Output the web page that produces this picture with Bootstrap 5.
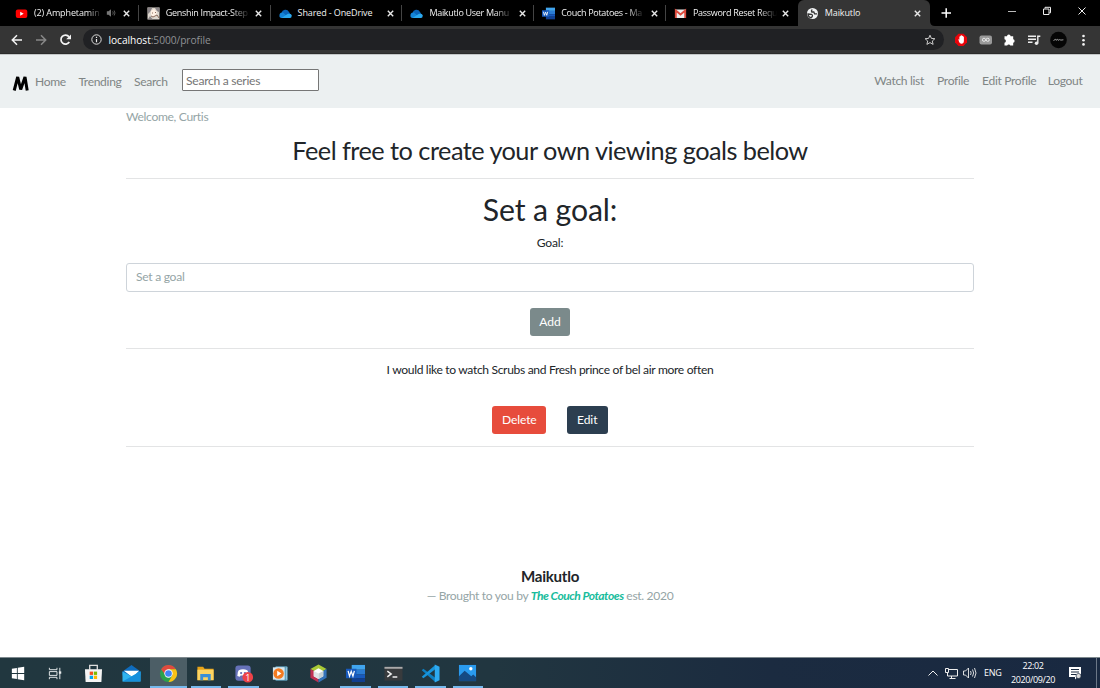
<!DOCTYPE html>
<html lang="en">
<head>
<meta charset="utf-8">
<title>Maikutlo</title>
<meta name="viewport" content="width=device-width, initial-scale=1">
<link href="https://cdn.jsdelivr.net/npm/bootstrap@5.3.0/dist/css/bootstrap.min.css" rel="stylesheet">
<style>
  body{font-family:Lato,sans-serif;font-size:12.08px;line-height:18px;letter-spacing:-.33px;color:#212529;height:688px;overflow:hidden;background:#fff}
  svg{display:block;flex:none}
  .ui-font{font-family:"Open Sans",sans-serif;letter-spacing:0}
  /* browser tabs */
  .tabstrip{height:26px;background:#000;padding-left:7px;color:#f2f2f2;font-size:9px;letter-spacing:-.12px}
  .tab-item{width:131.8px;height:26px;padding-left:8px;position:relative;flex:none}
  .tab-item>svg{width:13px;height:13px}
  .tab-label{margin-left:6px;width:84px;white-space:nowrap;line-height:26px}
  .fade-out{letter-spacing:-.3px;-webkit-mask-image:linear-gradient(90deg,#000 78%,transparent 100%)}
  .tab-close{width:7px!important;height:7px!important;margin-left:5.5px}
  .split{border-right:1px solid #444;height:16px;position:absolute;right:0;top:5px}
  .tab-current{background:#353535;border-radius:6px 6px 0 0}
  .toolbar{height:28px;background:#353535;border-bottom:1px solid #2b2b2b}
  .address{height:21px;background:#202124;border-radius:11px;width:861px;margin-left:10px;padding:0 8px 0 8px;font-size:10.2px;line-height:21px;color:#8f9194}
  .address b{font-weight:400;color:#fff}
  /* page */
  .sitebar{height:54px;background:#ecf0f1;border-top:1px solid #c4c7c8;padding:0}
  .sitebar .nav-link{color:#7f8585;padding:0;white-space:nowrap;line-height:18px}
  .search-box{width:137px;height:22px;border:1px solid #767676;border-radius:1px;padding:0 3px;font:12.08px Lato,sans-serif;letter-spacing:-.28px;background:#fff}
  .search-box::placeholder{color:#757575}
  .page-body{width:848px;height:549px;margin:0 auto}
  .rule{height:1px;background:#e3e4e5}
  .quiet{color:#95a5a6}
  .goal-input{height:28.5px;border-color:#ced4da;border-radius:3px;font-size:12.08px;letter-spacing:-.28px;padding:0 9px 1px;line-height:18px}
  .goal-input::placeholder{color:#95a5a6}
  .act{font-size:12.08px;line-height:18px;letter-spacing:-.1px;height:28px;border:0;border-radius:3px;color:#fff;padding:5px 0}
  .act:hover{color:#fff}
  .add{background:#7b8a8b;width:40px;padding-top:4.5px}.del{background:#e74c3c;width:54px}.edit{background:#2c3e50;width:41px}
  h1{font-size:30.2px;line-height:36px;font-weight:400;margin:0;letter-spacing:-.1px}
  h2{font-size:25.3px;line-height:31px;font-weight:400;margin:0;letter-spacing:-.53px}
  .brand-end{font-size:15.1px;line-height:19px;font-weight:700;letter-spacing:-.25px}
  .couch{color:#18bc9c;font-weight:700;font-style:italic;letter-spacing:-.48px}
  /* taskbar */
  .taskbar{height:31px;background:linear-gradient(90deg,#21373f 0%,#213640 45%,#1b2b40 70%,#192941 100%);border-top:1px solid #7d888d;color:#fff;font-size:9px}
  .task{width:37.45px;height:30px;display:flex;align-items:center;justify-content:center;position:relative}
  .task svg{width:19px;height:19px}
  .task.open::after{content:"";position:absolute;left:3.5px;right:3.5px;bottom:0;height:2px;background:#76b9ed}
  .task.front{background:#4c5e66}.task.front::after{left:0;right:0}
</style>
</head>
<body class="d-flex flex-column">
<svg width="0" height="0" class="position-absolute">
  <symbol id="x" viewBox="0 0 7 7"><path d="M.8.8l5.4 5.4M6.2.8L.8 6.2" stroke="#e8e8e8" stroke-width="1.4"/></symbol>
  <symbol id="cloud" viewBox="0 0 13 13"><path d="M2.500 6A4 4 0 0 1 10 5l2 3-6 2z" fill="#0a64b8"/><path d="M.5 8.500A2.700 2.700 0 0 1 4 5.600L10 11H2.500A2 2 0 0 1 .5 8.500z" fill="#1384d8"/><path d="M2.500 11L9 6.800q3.500-.7 3.800 2-.2 2.200-1.800 2.200z" fill="#2ba8ee"/></symbol>
  <symbol id="word" viewBox="0 0 20 20"><path d="M6 1h14v5H6z" fill="#41a5ee"/><path d="M6 6h14v5H6z" fill="#2b7cd3"/><path d="M6 11h14v4H6z" fill="#185abd"/><path d="M6 15h14v4H6z" fill="#103f91"/><path d="M0 5h11v10H0z" fill="#185abd"/><path d="M2.200 7.300l1.500 5.500 1.800-5 1.800 5 1.500-5.500" fill="none" stroke="#fff" stroke-width="1.300"/></symbol>
</svg>

<div class="tabstrip ui-font d-flex flex-shrink-0">
  <div class="tab-item d-flex align-items-center"><svg viewBox="0 0 13 13"><rect x=".8" y="2.500" width="11.500" height="8.500" rx="2" fill="#f00"/><path d="M5.200 4.700l3.500 2-3.500 2z" fill="#fff"/></svg><div class="tab-label fade-out" style="width:68px;letter-spacing:-.12px">(2) Amphetamin</div><svg viewBox="0 0 12 12" style="width:10px;height:10px;margin-left:4px"><path d="M1 4h2l3-2.500v9L3 8H1z" fill="#777"/><path d="M8 4q1.500 2 0 4M9.800 3q2 3 0 6" fill="none" stroke="#666"/></svg><svg class="tab-close" style="margin-left:7px"><use href="#x"/></svg><i class="split"></i></div>
  <div class="tab-item d-flex align-items-center"><svg viewBox="0 0 13 13"><path d="M.5.5h12v12H.5z" fill="#ded7ce"/><path d="M.5.5h5L3 5 1 7zM8 1l4.500-.5v5L10 4zM1 12l2-3 3 3.500z" fill="#8b8588"/><path d="M4 4l3-2 3 3-1 4-3 1-2-2z" fill="#fff0e3"/><path d="M5 6h1M8 5.500h1M4 9l2 1 4-2 2 3" stroke="#8c6c5c" fill="none"/></svg><div class="tab-label fade-out">Genshin Impact-Step</div><svg class="tab-close"><use href="#x"/></svg><i class="split"></i></div>
  <div class="tab-item d-flex align-items-center"><svg><use href="#cloud"/></svg><div class="tab-label">Shared - OneDrive</div><svg class="tab-close"><use href="#x"/></svg><i class="split"></i></div>
  <div class="tab-item d-flex align-items-center"><svg><use href="#cloud"/></svg><div class="tab-label fade-out">Maikutlo User Manu</div><svg class="tab-close"><use href="#x"/></svg><i class="split"></i></div>
  <div class="tab-item d-flex align-items-center"><svg><use href="#word"/></svg><div class="tab-label fade-out">Couch Potatoes - Ma</div><svg class="tab-close"><use href="#x"/></svg><i class="split"></i></div>
  <div class="tab-item d-flex align-items-center"><svg viewBox="0 0 13 13"><path d="M1 2.500h11v8.500H1z" fill="#eee"/><path d="M1.800 11V3.500l4.700 4 4.700-4V11" fill="none" stroke="#dd4b3e" stroke-width="1.900"/></svg><div class="tab-label fade-out">Password Reset Requ</div><svg class="tab-close"><use href="#x"/></svg></div>
  <div class="tab-item tab-current d-flex align-items-center"><svg viewBox="0 0 13 13"><circle cx="6.500" cy="6.500" r="5.500" fill="#f1f3f4"/><path d="M2 7l3.500.3q1.500.8.8 2.200L5 10.800Q2 10 2 7zM6.300 2.500q-1.500 1.200-.5 2.500h2l.8 1.800h2.500" fill="none" stroke="#353535" stroke-width="1.300"/></svg><div class="tab-label">Maikutlo</div><svg class="tab-close"><use href="#x"/></svg></div>
  <svg width="170" height="26" viewBox="0 0 170 26" fill="none"><path d="M0 26v-5q0 5 5 5z" fill="#353535"/><path d="M11.500 13h9.500M16.200 8.200v9.500" stroke="#fff" stroke-width="1.500"/><path d="M78 11.500h8" stroke="#bbb"/><path d="M113.500 9h5.500v5.500h-5.500zM115 8.500V7.300h5.500v5.500h-1.200M148.500 7.500l7 7M155.500 7.500l-7 7" stroke="#eee"/></svg>
</div>

<div class="toolbar ui-font d-flex align-items-center flex-shrink-0">
  <svg width="73" height="28" viewBox="0 0 73 28" fill="none" stroke-width="1.500"><path d="M22 14h-9.500M17 9.300L12.300 14l4.700 4.700" stroke="#f4f4f4"/><path d="M36 14h9.500M41 9.300l4.700 4.700-4.700 4.700" stroke="#888"/><path d="M69.300 16A4.500 4.500 0 1 1 69 10.800" stroke="#f4f4f4" stroke-width="1.700"/><path d="M71 8.500v4.800h-4.800z" fill="#f4f4f4"/></svg>
  <div class="address d-flex align-items-center"><svg width="11" height="11" viewBox="0 0 11 11"><circle cx="5.500" cy="5.500" r="4.700" fill="none" stroke="#ddd"/><path d="M5.500 5v3.200M5.500 2.700v1.200" stroke="#eee" stroke-width="1.200"/></svg><span style="margin-left:6.500px;margin-top:1px;letter-spacing:-.05px"><b>localhost</b>:5000/profile</span><svg class="ms-auto" width="12" height="12" viewBox="0 0 12 12"><path d="M6 1.200l1.400 3.200 3.500.3-2.600 2.300.8 3.400L6 8.600l-3.100 1.800.8-3.400L1.100 4.700l3.500-.3z" fill="none" stroke="#ccc"/></svg></div>
  <svg width="156" height="28" viewBox="944 0 156 28"><path d="M958.500 7.800h5l3.500 3.500v5l-3.500 3.600h-5l-3.500-3.600v-5z" fill="#e8050b"/><path d="M958.200 13l1.200.8v-3.300h.8V9.700h1v-.4h1v.6h1v.9h.7v4q0 3-2.500 3-1.500 0-2.300-1.700z" fill="#fff"/><rect x="979.500" y="9.500" width="12.500" height="9" rx="2" fill="#999"/><rect x="982.500" y="12.300" width="3" height="3" rx="1.300" fill="none" stroke="#eee"/><rect x="986.200" y="12.300" width="3" height="3" rx="1.300" fill="none" stroke="#eee"/><path d="M1004.500 10.300h2.500a1.800 1.800 0 0 1 3.600 0h2.600v2.900a1.800 1.800 0 0 1 0 3.500v2.900h-2.900a1.600 1.600 0 0 0-3.100 0h-2.700v-2.800a1.800 1.800 0 0 0 0-3.500z" fill="#fff"/><path d="M1028 10.300h8M1028 13.300h8M1028 16.300h4.500M1037.800 17.300V10.300h2.500" fill="none" stroke="#eee" stroke-width="1.400"/><circle cx="1036.500" cy="17.300" r="1.700" fill="#eee"/><circle cx="1058.500" cy="14" r="8.300" fill="#050505"/><path d="M1053.500 14.500l2-1.200.5 1 1.500-1 .6 1 1.500-.7 1.300.5 2.500-.3" stroke="#aaa" stroke-width=".9" fill="none"/><g fill="#f4f4f4"><circle cx="1083.500" cy="10" r="1.300"/><circle cx="1083.500" cy="14.200" r="1.300"/><circle cx="1083.500" cy="18.400" r="1.300"/></g></svg>
</div>

<nav class="navbar sitebar flex-shrink-0 flex-nowrap">
  <div class="d-flex align-items-center">
    <svg width="35" height="22" viewBox="0 0 35 22"><path d="M14.200 19.500L17.700 6l3 12.500L25 6l2.200 13.500" fill="none" stroke="#000" stroke-width="3" stroke-linejoin="bevel"/></svg>
    <a class="nav-link" href="#">Home</a><a class="nav-link" href="#" style="margin-left:12.500px">Trending</a><a class="nav-link" href="#" style="margin-left:12.500px">Search</a>
    <input class="search-box" style="margin-left:14.500px;margin-top:-3px" placeholder="Search a series">
  </div>
  <div class="d-flex" style="margin-right:17.500px;margin-top:-1px"><a class="nav-link" href="#">Watch list</a><a class="nav-link" href="#" style="margin-left:13px">Profile</a><a class="nav-link" href="#" style="margin-left:13px">Edit Profile</a><a class="nav-link" href="#" style="margin-left:11.500px">Logout</a></div>
</nav>

<main class="page-body text-center flex-shrink-0">
  <div class="quiet text-start">Welcome, Curtis</div>
  <h2 style="margin-top:9px">Feel free to create your own viewing goals below</h2>
  <div class="rule" style="margin-top:12px"></div>
  <h1 style="margin-top:12px">Set a goal:</h1>
  <label for="goal" class="d-block" style="margin-top:7px;letter-spacing:-.2px">Goal:</label>
  <input id="goal" class="form-control goal-input" style="margin-top:11px" placeholder="Set a goal">
  <button class="btn act add d-block mx-auto" style="margin-top:16.500px">Add</button>
  <div class="rule" style="margin-top:12px"></div>
  <div style="margin-top:12px">I would like to watch Scrubs and Fresh prince of bel air more often</div>
  <div class="d-flex justify-content-center" style="gap:20.500px;margin-top:27px"><button class="btn act del">Delete</button><button class="btn act edit">Edit</button></div>
  <div class="rule" style="margin-top:12px"></div>
  <footer style="margin-top:119.500px"><div class="brand-end">Maikutlo</div><div class="quiet" style="margin-top:1px">— Brought to you by <span class="couch">The Couch Potatoes</span> est. 2020</div></footer>
</main>

<div class="taskbar ui-font d-flex align-items-center flex-shrink-0">
  <div class="task"><svg viewBox="0 0 20 20"><path d="M3 5l5.300-.8v5.300H3zM9.200 4L16 3v6.500H9.200zM3 10.500h5.300v5.300L3 15zM9.200 10.500H16V17l-6.800-1z" fill="#fff"/></svg></div>
  <div class="task"><svg viewBox="0 0 20 20" fill="none" stroke="#e8eced"><path d="M2.500 4v2h8V4M2.500 8h8v4h-8zM2.500 16v-2h8v2M13.500 4v12"/><path d="M12.500 9h2.500" stroke-width="2.500"/></svg></div>
  <div class="task"><svg viewBox="0 0 20 20"><path d="M6 6V1.500h8V6" fill="none" stroke="#ddd" stroke-width="1.400"/><path d="M1 5.500h18L18.300 19H1.700z" fill="#f5f5f5"/><path d="M6 8h3.500v3.500H6z" fill="#f25022"/><path d="M10.300 8h3.500v3.500h-3.500z" fill="#7fba00"/><path d="M6 12.300h3.500v3.500H6z" fill="#00a4ef"/><path d="M10.300 12.300h3.500v3.500h-3.500z" fill="#ffb900"/></svg></div>
  <div class="task"><svg viewBox="0 0 20 20"><path d="M.5 8L10 1l9.500 7v4H.5z" fill="#0f6cbd"/><path d="M2 7h16l-7 7z" fill="#fff"/><path d="M.5 8l9.500 5 9.500-5v10.500H.5z" fill="#30b4ef"/><path d="M.5 18.500L19.500 8v10.500z" fill="#1690dc"/></svg></div>
  <div class="task open front"><svg viewBox="0 0 20 20"><circle cx="10" cy="10" r="9" fill="#2ba24c"/><path d="M2.200 5.500A9 9 0 0 1 17.800 5.500H10L7 12z" fill="#e04a3f"/><path d="M10 5.500h7.800A9 9 0 0 1 10 19l4-7z" fill="#fbc116"/><circle cx="10" cy="10" r="4.400" fill="#fff"/><circle cx="10" cy="10" r="3.500" fill="#4285f4"/></svg></div>
  <div class="task open"><svg viewBox="0 0 20 20"><path d="M1.500 3h6L9 5h9.500v12h-17z" fill="#e8a317"/><path d="M1.500 6h17v11h-17z" fill="#fcd462"/><path d="M4.500 17v-6.500h11V17H12.500v-3h-5v3z" fill="#3a8fd6"/></svg></div>
  <div class="task open"><svg viewBox="0 0 20 20"><rect x="1.500" y="1.500" width="16" height="16" rx="3" fill="#6571b8"/><path d="M3.500 12.500q0-4.500 1.500-6 4.500-2 9 0 1.500 1.500 1.500 6l-2.500 1-1-1.500H7l-1 1.500z" fill="#fff"/><circle cx="7.500" cy="9.500" r="1.200" fill="#6571b8"/><circle cx="11.500" cy="9.500" r="1.200" fill="#6571b8"/><circle cx="14.500" cy="14" r="5.600" fill="#ee4248"/><text x="14.500" y="17.500" text-anchor="middle" font-size="9.500" fill="#fff">1</text></svg></div>
  <div class="task"><svg viewBox="0 0 20 20"><path d="M5 3h12v14H5z" fill="#b4d7e8" stroke="#5ba0bd"/><path d="M15 3v14" stroke="#468eae"/><path d="M2 3.500h12v13H2z" fill="#d8e8ef"/><circle cx="8" cy="10" r="5.500" fill="#f47b20"/><path d="M6.500 7l4.500 3-4.500 3z" fill="#fff"/></svg></div>
  <div class="task"><svg viewBox="0 0 20 20"><path d="M10 .5l8.500 4.800-8.500 5-8.500-5z" fill="#a9c936"/><path d="M1.500 5.300l8.500 5v9.200l-8.500-5z" fill="#bf3052"/><path d="M18.500 5.300l-8.500 5v9.200l8.500-5z" fill="#3472b8"/><path d="M10 4.500l5 2.800v5.600l-5 3-5-3V7.300z" fill="#fff"/><path d="M5 7.300l5 2.800v5.800l-5-3z" fill="#dfe4e6"/><path d="M10 10.100l5-2.800v5.600l-5 3z" fill="#c8d1d4"/></svg></div>
  <div class="task open"><svg viewBox="0 0 20 20"><use href="#word"/></svg></div>
  <div class="task open"><svg viewBox="0 0 20 20"><path d="M.5 3h19v14.500H.5z" fill="#383b3d"/><path d="M.5 3h19v2H.5z" fill="#aaa"/><path d="M3.500 7.500l4 3-4 3M9 13.800h5" fill="none" stroke="#eee" stroke-width="1.600"/></svg></div>
  <div class="task open"><svg viewBox="0 0 20 20"><path d="M.8 6.500L2.500 5 15 14.500V19z" fill="#0d7fc2"/><path d="M.8 13.500L2.500 15 15 5.500V1z" fill="#1795dc"/><path d="M14.500.5L19.500 3v14l-5 2.500z" fill="#2eaaf0"/></svg></div>
  <div class="task open"><svg viewBox="0 0 20 20"><path d="M1 1h18v17H1z" fill="#2a9bee"/><path d="M1 13l6-6 7 6 2-2 3 3v4H1z" fill="#154a83"/><circle cx="13.500" cy="5" r="1.800" fill="#fff"/></svg></div>
  <svg class="ms-auto" width="56" height="30" viewBox="0 0 56 30" fill="none" stroke="#eee"><path d="M4.500 17.500l4.500-4.500 4.500 4.500"/><path d="M25 11.500h8.500v6.500H23.500v-3M27.500 18v2.500M25.500 20.500h6"/><path d="M21.500 10.500h3v4h-3z"/><path d="M39.500 13h2l3-3v10l-3-3h-2zM46.500 13q1.300 2 0 4M48.500 11.500q2.200 3.500 0 7M50.500 10q3 5 0 10" stroke-width=".9"/></svg>
  <span style="margin-left:4px;width:19px;white-space:nowrap;letter-spacing:-.25px">ENG</span>
  <div class="text-center" style="width:48px;margin-left:6px;line-height:14px;letter-spacing:-.4px;white-space:nowrap">22:02<br>2020/09/20</div>
  <svg width="43" height="30" viewBox="1057 0 43 30"><path d="M1069 9h12v10h-3.500l-2.500 2.500V19h-6z" fill="#fff"/><path d="M1071 11.500h8M1071 14h8M1071 16.500h5" stroke="#1b2b40"/><circle cx="1078.500" cy="18" r="2.500" fill="#ddd" stroke="#1b2b40" stroke-width=".7"/><path d="M1096.500 0v30" stroke="#6b7787"/></svg>
</div>
<script src="https://cdn.jsdelivr.net/npm/bootstrap@5.3.0/dist/js/bootstrap.bundle.min.js"></script>
</body>
</html>
